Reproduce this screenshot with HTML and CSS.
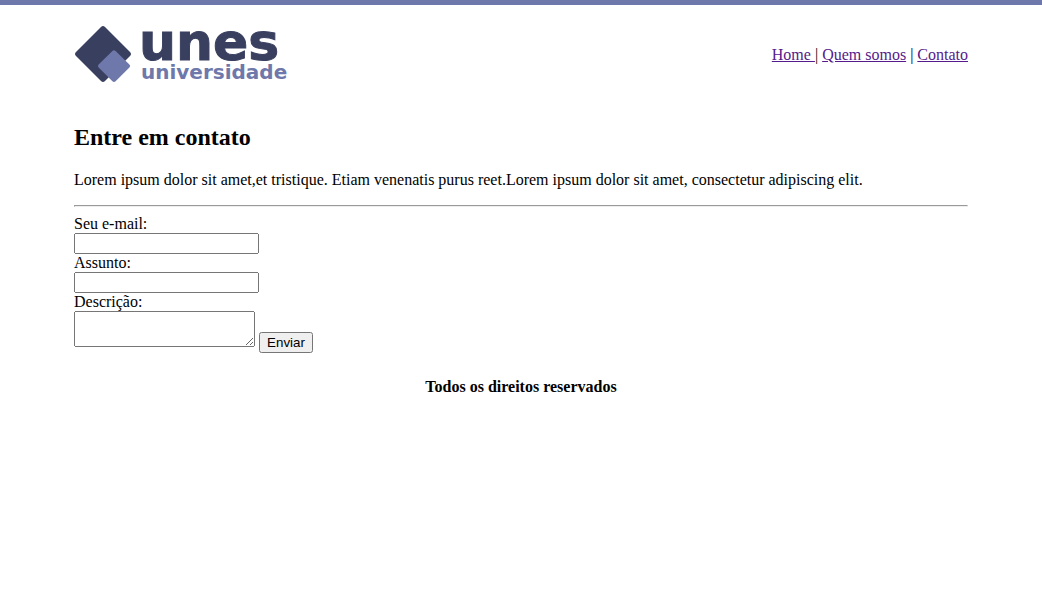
FILE: index.html
```
<!DOCTYPE html>
<html lang="pt-br">
<head>
<meta charset="utf-8">
<title>Unes Universidade - Contato</title>
<link rel="stylesheet" href="styles.css">
</head>
<body>
<header class="header">
  <svg class="logo" width="214" height="62" viewBox="0 0 214 62" role="img" aria-label="unes universidade">
    <path class="logo-dark" d="M27 3Q29 1.200 31 3L56 28Q58 30 56 32L31 57Q29 58.800 27 57L2 32Q0 30 2 28Z"/>
    <path class="logo-light" d="M38.400 27Q40 25.400 41.600 27L55.400 40.600Q57 42 55.400 43.600L41.600 57.200Q40 58.800 38.400 57.200L24.600 43.600Q23 42 24.600 40.600Z"/>
    <text class="logo-name" x="65" y="36">unes</text>
    <text class="logo-sub" x="67" y="55">universidade</text>
  </svg>
  <nav><a href="#home">Home </a>| <a href="#quem-somos">Quem somos</a> | <a href="#contato">Contato</a></nav>
</header>
<main class="content">
  <h2>Entre em contato</h2>
  <p>Lorem ipsum dolor sit amet,et tristique. Etiam venenatis purus reet.Lorem ipsum dolor sit amet, consectetur adipiscing elit.</p>
  <hr>
  <form class="form">
    <label for="email">Seu e-mail:</label>
    <input class="field" id="email" type="email">
    <label for="assunto">Assunto:</label>
    <input class="field" id="assunto" type="text">
    <label for="descricao">Descrição:</label>
    <div class="actions">
      <textarea class="message" id="descricao"></textarea>
      <button class="send" type="submit">Enviar</button>
    </div>
  </form>
</main>
<footer class="footer">Todos os direitos reservados</footer>
</body>
</html>
```
FILE: styles.css
```
body {
  margin: 0;
  border-top: 5px solid #6e78aa;
  background: #fff;
  color: #000;
  font: 16px/18px "Liberation Serif", "Times New Roman", serif;
}
.header {
  display: flex;
  justify-content: space-between;
  align-items: center;
  padding: 19px 74px 18px;
}
.header a { color: #551a8b; }
.logo {
  display: block;
  overflow: visible;
}
.logo-dark, .logo-name { fill: #393f5f; }
.logo-light, .logo-sub { fill: #6e78aa; }
.logo-name {
  font: bold 52px "DejaVu Sans", sans-serif;
  stroke: #393f5f;
  stroke-width: 1px;
}
.logo-sub { font: bold 20px "DejaVu Sans", sans-serif; }
.content { padding: 20px 74px 0; }
.content h2 {
  margin: 0 0 20px;
  font-size: 24px;
  line-height: 27px;
}
.content p { margin: 0 0 16px; }
.content hr { margin: 0 0 8px; }
.form {
  display: flex;
  flex-direction: column;
  align-items: flex-start;
}
.field {
  box-sizing: border-box;
  width: 185px;
  height: 21px;
}
.actions {
  display: flex;
  align-items: flex-end;
  gap: 4px;
}
.message {
  box-sizing: border-box;
  width: 181px;
  height: 36px;
  margin: 0 0 6px;
}
.send {
  width: 54px;
  height: 21px;
  padding: 1px 6px;
}
.footer {
  padding: 25px 74px;
  font-weight: bold;
  text-align: center;
}
```
